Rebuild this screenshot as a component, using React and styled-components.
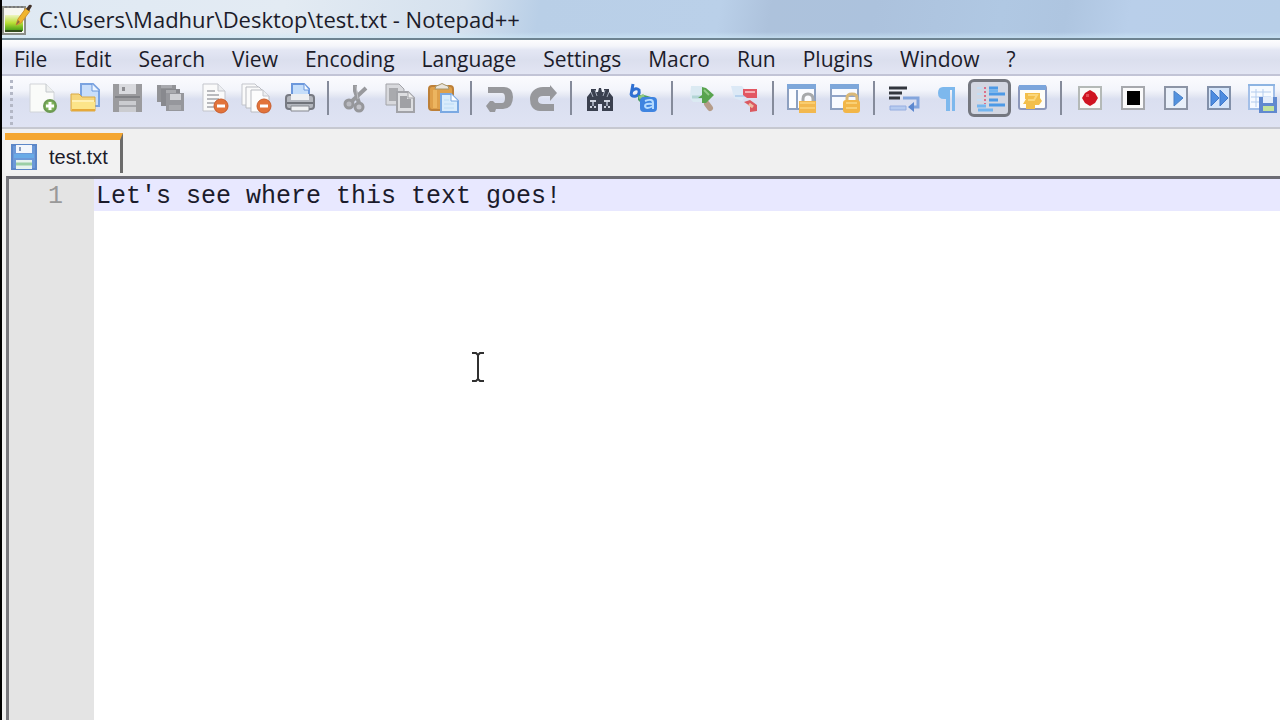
import React from "react";
import styled, { createGlobalStyle } from "styled-components";

const GlobalStyle = createGlobalStyle`
  *, *::before, *::after { box-sizing: border-box; }
  body { margin: 0; background: #fff; }
  button, textarea { font: inherit; color: inherit; margin: 0; }
`;

const Window = styled.div`
  display: flex;
  flex-direction: column;
  min-height: 100vh;
  overflow: hidden;
  border-left: 2px solid #000;
  background: #f0f0f0;
  color: #1c1c2a;
  font-family: "Open Sans", "Noto Sans", sans-serif;
`;

const TitleBar = styled.header`
  display: flex;
  align-items: center;
  gap: 5px;
  height: 40px;
  border-bottom: 2px solid #6d8391;
  background:
    linear-gradient(to bottom, transparent 32px, rgba(205, 232, 246, 0.6) 38px),
    linear-gradient(100deg, #dfe9f3 0%, #e3ebf3 22%, #d5e1ee 36%, #b9cfe7 42%, #bad0e9 56%, #adc2dc 60%, #acc2dd 68%, #b0c8e3 78%, #aec5e0 83%, #b9cfea 88%, #b8cfe8 100%);
`;

const Title = styled.h1`
  margin: 0;
  font-size: 22px;
  line-height: 32px;
  font-weight: 400;
  white-space: nowrap;
`;

const MenuBar = styled.nav`
  display: flex;
  gap: 27px;
  height: 36px;
  padding: 2px 12px 0;
  border-bottom: 2px solid #c2c4d6;
  background: linear-gradient(to bottom, #fdfdfe 0, #f4f5fa 6px, #e4e7f4 10px, #dbdfee 20px, #e2e5f3 34px);
`;

const MenuItem = styled.button`
  padding: 0;
  border: 0;
  background: none;
  font-size: 21px;
  line-height: 34px;
  white-space: nowrap;
`;

const Toolbar = styled.div`
  display: flex;
  align-items: center;
  height: 53px;
  padding-bottom: 8px;
  border-bottom: 2px solid #c6c8d0;
  background: linear-gradient(to bottom, #fbfbfe 0, #f3f5fb 14px, #e6e9f4 19px, #dadff0 23px, #dfe3f3 50px);
`;

const Grip = styled.span`
  flex: none;
  align-self: flex-start;
  width: 3px;
  height: 48px;
  margin: 4px 7px 0 8px;
  background: repeating-linear-gradient(to bottom, #b4b8c6 0 3px, transparent 3px 6px);
`;

const Divider = styled.span`
  flex: none;
  width: 2px;
  height: 34px;
  margin: 0 ${(p) => (p.$wide ? 7 : 6)}px;
  background: #858b9b;
`;

const ToolButton = styled.button`
  flex: none;
  display: grid;
  place-items: center;
  width: 43px;
  height: 38px;
  padding: 0;
  border: 3px solid ${(p) => (p.$active ? "#74777f" : "transparent")};
  border-radius: 6px;
  background: ${(p) => (p.$active ? "#d3d7e2" : "none")};
`;

const Icon = styled.svg`
  display: block;
  flex: none;
  width: ${(p) => p.$size || 32}px;
  height: ${(p) => p.$size || 32}px;
`;

const TabBar = styled.div`
  display: flex;
  align-items: flex-start;
  height: 47px;
  padding: 4px 0 0 3px;
  background: #f0f0f0;
`;

const Tab = styled.button`
  display: flex;
  align-items: center;
  gap: 12px;
  height: 40px;
  padding: 0 12px 0 6px;
  border: 0;
  border-top: 7px solid #f4a631;
  border-right: 3px solid #6b6b6b;
  background: #f2f2f2;
  font-family: "Liberation Sans", Arial, sans-serif;
  font-size: 20px;
  line-height: 32px;
`;

const EditorFrame = styled.main`
  position: relative;
  flex: 1;
  display: flex;
  margin-left: 4px;
  border-top: 3px solid #6c6c74;
  border-left: 3px solid #77777c;
  background: #fff;
  font-family: "Liberation Mono", "Courier New", monospace;
  font-size: 25px;
  line-height: 32px;
`;

const Gutter = styled.div`
  flex: none;
  width: 85px;
  padding: 2px 31px 0 0;
  background: #e4e4e4;
  color: #999;
  text-align: right;
`;

const TextArea = styled.textarea`
  flex: 1;
  min-width: 0;
  padding: 2px 2px 0;
  border: 0;
  outline: 0;
  resize: none;
  background: linear-gradient(#e8e8ff, #e8e8ff) 0 0 / 100% 32px no-repeat #fff;
  color: #1b1b2c;
`;

const Pointer = styled.svg`
  position: absolute;
  left: 461px;
  top: 172px;
  width: 16px;
  height: 32px;
  pointer-events: none;
`;

const AppLogo = () => (
  <Icon viewBox="0 0 32 32" aria-hidden="true">
    <defs>
      <linearGradient id="lime" x1="0" y1="0" x2="0" y2="1">
        <stop offset="0" stopColor="#eef5c0" />
        <stop offset="0.5" stopColor="#b9df35" />
        <stop offset="1" stopColor="#3f9a16" />
      </linearGradient>
    </defs>
    <path d="M1 4h22v27H1z" fill="#f7f7f0" stroke="#8b8e88" strokeWidth="2" />
    <path d="M3 12h18v16H3z" fill="url(#lime)" />
    <path d="M3 28h17" stroke="#334d1c" strokeWidth="2" />
    <path d="M3 4h18" stroke="#77787a" strokeWidth="2" strokeDasharray="2 2" />
    <path d="M14 22l2-6L24 5l4 3-9 12z" fill="#f0b52d" stroke="#cf9331" />
    <path d="M24 6l3-4q2-1 3 1l-3 5z" fill="#42322a" />
    <path d="M14 22l2-5 2 2z" fill="#8a6d42" />
  </Icon>
);

const icons = {
  new: (
    <>
      <path d="M4 2h16l8 8v20H4z" fill="#fafbf9" stroke="#d1d4d8" />
      <path d="M20 2v8h8" fill="#eef0f0" stroke="#c4c8cc" />
      <circle cx="24" cy="24" r="6" fill="#80b45c" stroke="#6c9a54" strokeWidth="2" />
      <path d="M24 20v8M20 24h8" stroke="#fff" strokeWidth="3" />
    </>
  ),
  open: (
    <>
      <path d="M12 2h12l6 6v16H12z" fill="#c9defa" stroke="#7ba3e0" strokeWidth="2" />
      <path d="M23 2v7h7" fill="#eef6ff" stroke="#6a97dc" />
      <path d="M2 12h8l3 3h13v14H2z" fill="#f6d67c" stroke="#d9a944" />
      <path d="M3 20h23v9H3z" fill="#fce489" />
      <path d="M3 19h22" stroke="#fff0b4" strokeWidth="2" />
      <path d="M3 28h23" stroke="#e6a93a" strokeWidth="2" />
    </>
  ),
  save: (
    <>
      <path d="M1 2h29v28H1z" fill="#9b9b9e" />
      <path d="M7 2h17v10H7z" fill="#d9dade" />
      <path d="M10 5h3v4h-3z" fill="#8d8d91" />
      <path d="M3 15h25" stroke="#808185" strokeWidth="2" />
      <path d="M7 19h17v11H7z" fill="#cbccd0" />
      <path d="M7 24h17" stroke="#a4a5aa" strokeWidth="2" />
    </>
  ),
  saveAll: (
    <>
      <path d="M2 3h19v17H2z" fill="#929397" />
      <path d="M6 3h11v3H6z" fill="#a8a9ae" />
      <path d="M6 7h19v17H6z" fill="#88898e" />
      <path d="M11 8h10v3H11z" fill="#a9aaae" />
      <path d="M11 11h18v18H11z" fill="#96979c" />
      <path d="M15 12h11v6H15z" fill="#d0d1d5" />
      <path d="M14 23h12v5H14z" fill="#a9aaae" />
    </>
  ),
  close: (
    <>
      <path d="M5 2h15l7 7v20H5z" fill="#fafafa" stroke="#c3c5cb" />
      <path d="M20 2v7h7" fill="#eceef1" stroke="#c3c5cb" />
      <path d="M9 9h8M9 13h12M9 17h12M9 21h8M9 25h7" stroke="#b9babe" strokeWidth="2" />
      <circle cx="23" cy="24" r="7" fill="#e2733a" stroke="#c85c2c" />
      <path d="M19 24h8" stroke="#fff" strokeWidth="3" />
    </>
  ),
  closeAll: (
    <>
      <path d="M1 2h13l4 4v17H1z" fill="#fafafa" stroke="#c3c5cb" />
      <path d="M5 5h13l5 5v16H5z" fill="#fafafa" stroke="#b9bbc1" />
      <path d="M10 8h12l6 6v16H10z" fill="#fcfcfc" stroke="#b9bbc1" />
      <path d="M22 8v6h6" fill="#eceef1" stroke="#c3c5cb" />
      <circle cx="23" cy="24" r="7" fill="#e2733a" stroke="#c85c2c" />
      <path d="M19 24h8" stroke="#fff" strokeWidth="3" />
    </>
  ),
  print: (
    <>
      <path d="M8 15V2h12l5 5v8z" fill="#c5defa" stroke="#6c98dc" strokeWidth="2" />
      <path d="M20 2v6h5" fill="#f3f9ff" stroke="#6c98dc" />
      <rect x="2" y="13" width="28" height="14" rx="3" fill="#b4b7be" stroke="#777a82" strokeWidth="2" />
      <path d="M7 12h18v6H7z" fill="#eef0f2" />
      <path d="M3 21h26" stroke="#70737a" strokeWidth="2" />
      <path d="M7 24h18v5H7z" fill="#f0f1f3" stroke="#85888f" />
    </>
  ),
  cut: (
    <>
      <path d="M14 3v6l4 12M25 6L10 20" fill="none" stroke="#98999d" strokeWidth="4" />
      <path d="M15 4l2 13" stroke="#c1c2c6" />
      <circle cx="8" cy="22" r="4" fill="#b9bac0" stroke="#96979b" strokeWidth="3" />
      <circle cx="18" cy="25" r="4" fill="#c3c4ca" stroke="#96979b" strokeWidth="3" />
    </>
  ),
  copy: (
    <>
      <path d="M2 2h13l5 5v16H2z" fill="#d8d9dd" stroke="#a2a3a8" />
      <path d="M5 6h9v13H5z" fill="#a9aaae" />
      <path d="M13 10h11l6 6v14H13z" fill="#dedfe2" stroke="#a2a3a8" strokeWidth="2" />
      <path d="M16 14h7v3h4v9H16z" fill="#a0a1a5" />
      <path d="M24 10v6h6" fill="#eee" stroke="#a2a3a8" />
    </>
  ),
  paste: (
    <>
      <rect x="2" y="4" width="24" height="24" rx="3" fill="#dfa04a" stroke="#bd8038" strokeWidth="2" />
      <path d="M6 8h4v18H6z" fill="#ecb560" />
      <path d="M8 7q0-4 4-4 3-3 6 0 4 0 4 4z" fill="#e9e5dc" stroke="#a79468" />
      <path d="M14 12h10l7 7v11H14z" fill="#d9ecfc" stroke="#7ba9e2" strokeWidth="2" />
      <path d="M24 12v7h7" fill="#fff" stroke="#78a7e2" />
      <path d="M17 18h5M17 22h10M17 26h10" stroke="#bcdcf6" />
    </>
  ),
  undo: (
    <path d="M4 5h16q4 0 7 3 2 3 2 7t-2 8q-3 4-8 4h-7l-1 3H6l-4-6 4-5h3l2 2h7q3 0 3-5t-3-5H4z" fill="#97989c" />
  ),
  redo: (
    <path d="M23 3l7 8-7 8v-5h-7q-5 0-5 4t5 4h11v7H13q-5 0-8-4-2-3-2-8 0-5 3-8 4-4 10-4h7z" fill="#97989c" />
  ),
  find: (
    <>
      <path d="M3 15l4-5V7h5v3h2l1-4h2l1 4h2V7h5v3l4 5v14H18v-7h-4v7H3z" fill="#3a404f" />
      <path d="M7 10l2 5M11 8l2 6M21 8l-2 6M25 10l-2 5" stroke="#a6acbb" />
      <path d="M6 18h6v2H6zM20 18h6v2h-6zM6 24h2v2H6zM10 24h2v2h-2zM20 24h2v2h-2zM24 24h2v2h-2z" fill="#ced3df" />
      <path d="M9 20v4M23 20v4" stroke="#9aa1b2" strokeWidth="2" />
    </>
  ),
  replace: (
    <>
      <path d="M6 2L4 13M5 9q4-4 7-1 1 5-3 6-4 1-5-2" fill="none" stroke="#2f70d2" strokeWidth="3" />
      <path d="M11 13h6l7 2-7 9-6-6z" fill="#4c9c69" />
      <path d="M12 16l5-3" stroke="#91ca84" strokeWidth="3" />
      <rect x="13" y="15" width="17" height="15" rx="4" fill="#3f84e0" />
      <path d="M18 19q8-3 8 2v6M26 22q-8-1-8 2 1 4 8 0" fill="none" stroke="#b5dbff" strokeWidth="2" />
    </>
  ),
  zoomIn: (
    <>
      <path d="M5 4h11l7 9-5 7H7l-3-4z" fill="#dbeaf2" />
      <path d="M6 15h11" stroke="#b2d5d5" strokeWidth="3" />
      <path d="M21 22l3 4" stroke="#b59c89" strokeWidth="6" strokeLinecap="round" />
      <path d="M16 5l4 1 8 7-8 8h-4v-5h-4l4-3z" fill="#58a34f" />
      <path d="M18 8l5 5" stroke="#91c987" strokeWidth="2" />
    </>
  ),
  zoomOut: (
    <>
      <path d="M2 4h11l5 6-5 9-8-3z" fill="#dce9f6" />
      <path d="M6 14h12" stroke="#b8d2ed" strokeWidth="2" />
      <path d="M14 7h14v9H18l-4-3z" fill="#e25762" />
      <path d="M16 10h10" stroke="#f4afb3" strokeWidth="2" />
      <path d="M15 20l6-2 7 5v6l-7 1v-6z" fill="#da5960" />
      <path d="M20 22l4 3" stroke="#efbca0" strokeWidth="3" />
    </>
  ),
  syncV: (
    <>
      <path d="M2 4h27v23H2z" fill="#fbfcff" stroke="#8da0c0" strokeWidth="2" />
      <path d="M1 2h29v5H1z" fill="#7ea7da" />
      <path d="M11 8v18" stroke="#8ca1c2" strokeWidth="2" />
      <path d="M17 20v-3q0-5 5-5t5 5v3" fill="none" stroke="#a7a9ab" strokeWidth="3" />
      <path d="M13 19h17v12H13z" fill="#f2b84f" />
      <path d="M14 21h15M14 26h15" stroke="#f9cd70" strokeWidth="2" />
    </>
  ),
  syncH: (
    <>
      <path d="M2 4h27v23H2z" fill="#f8faff" stroke="#8da0c0" strokeWidth="2" />
      <path d="M1 2h29v5H1z" fill="#7ea7da" />
      <path d="M3 14h25" stroke="#91a4c8" strokeWidth="2" />
      <path d="M18 20v-4q0-4 5-4t5 4v4" fill="none" stroke="#d9b878" strokeWidth="3" />
      <rect x="14" y="18" width="17" height="13" rx="3" fill="#f2b648" />
      <path d="M17 21h11M17 26h11" stroke="#f9d075" strokeWidth="2" />
    </>
  ),
  wrap: (
    <>
      <path d="M1 6h18M1 11h13M1 16h11" stroke="#32363e" strokeWidth="3" />
      <path d="M2 24h16v4H2z" fill="#b6cbf0" stroke="#96aee0" />
      <path d="M15 16h15v9h-6" fill="none" stroke="#83a5dd" strokeWidth="3" />
      <path d="M20 25l6-5v10z" fill="#5c88cf" />
    </>
  ),
  pilcrow: (
    <path d="M24 5H12q-5 0-5 6t6 6h2v12h4V8h2v21h3z" fill="#7db8ed" />
  ),
  indent: (
    <>
      <path d="M15 6h9M15 12h16M15 18h9M15 23h16" stroke="#4d9ae6" strokeWidth="3" />
      <path d="M15 9h9M4 28h15M3 24h9" stroke="#74b6f0" strokeWidth="3" />
      <path d="M3 6h5M3 12h5M3 18h5" stroke="#c3ddf3" strokeWidth="2" />
      <path d="M11 5v17" stroke="#dc6f8b" strokeWidth="2" strokeDasharray="2 2" />
    </>
  ),
  language: (
    <>
      <rect x="2" y="4" width="27" height="23" rx="2" fill="#fffdf8" stroke="#8d98bb" strokeWidth="2" />
      <path d="M2 3h27v5H2z" fill="#7ba5dc" />
      <path d="M8 11h15v5l2 3-3 4h-4v4H9v-5H6l3-5H8z" fill="#f3bf4b" />
      <path d="M11 13h9l-3 5h-6" fill="none" stroke="#fbd77b" strokeWidth="2" />
    </>
  ),
  record: (
    <>
      <path d="M5 5h22v22H5z" fill="#f9faf8" stroke="#b4b9b7" strokeWidth="2" />
      <path d="M16 8l5 3 3 5-3 5-5 3-5-3-3-5 3-5z" fill="#cf1420" />
      <path d="M12 12h3v3h-3z" fill="#e54b52" />
    </>
  ),
  stop: (
    <>
      <path d="M5 5h22v22H5z" fill="#fafafb" stroke="#a6a8ad" strokeWidth="2" />
      <path d="M10 9h13v14H10z" fill="#000" />
    </>
  ),
  play: (
    <>
      <path d="M5 5h22v22H5z" fill="#e9f0fa" stroke="#8c94a5" strokeWidth="2" />
      <path d="M14 9l9 7-9 8z" fill="#5292df" stroke="#4a80c4" />
    </>
  ),
  playMany: (
    <>
      <path d="M5 5h22v22H5z" fill="#d5e5fa" stroke="#8290a9" strokeWidth="2" />
      <path d="M8 8l8 8-8 8zM17 8l8 8-8 8z" fill="#4d8ce0" stroke="#4078c8" />
    </>
  ),
  saveMacro: (
    <>
      <path d="M3 3h25v24H3z" fill="#f6faff" stroke="#a3bfe8" strokeWidth="2" />
      <path d="M2 3h27" stroke="#8db4e2" strokeWidth="2" />
      <path d="M5 10h20M5 15h20M5 20h10M10 7v18M17 7v8" stroke="#b4cdee" />
      <path d="M13 15h18v16H13z" fill="#6189cf" />
      <path d="M17 15h10v6H17z" fill="#e4edfa" />
      <path d="M17 24h11v5H17z" fill="#c3e39c" />
    </>
  ),
};

const groups = [
  { tools: [["new", "New"], ["open", "Open"], ["save", "Save"], ["saveAll", "Save All"], ["close", "Close"], ["closeAll", "Close All"], ["print", "Print"]] },
  { tools: [["cut", "Cut"], ["copy", "Copy"], ["paste", "Paste"]] },
  { tools: [["undo", "Undo"], ["redo", "Redo"]] },
  { tools: [["find", "Find"], ["replace", "Replace"]] },
  { wide: true, tools: [["zoomIn", "Zoom In"], ["zoomOut", "Zoom Out"]] },
  { tools: [["syncV", "Synchronize Vertical Scrolling"], ["syncH", "Synchronize Horizontal Scrolling"]] },
  { wide: true, tools: [["wrap", "Word Wrap"], ["pilcrow", "Show All Characters"], ["indent", "Show Indent Guide"], ["language", "User-Defined Language"]] },
  { tools: [["record", "Start Recording"], ["stop", "Stop Recording"], ["play", "Playback"], ["playMany", "Run a Macro Multiple Times"], ["saveMacro", "Save Macro"]] },
];

const menus = ["File", "Edit", "Search", "View", "Encoding", "Language", "Settings", "Macro", "Run", "Plugins", "Window", "?"];

export default function App() {
  return (
    <Window>
      <GlobalStyle />
      <TitleBar>
        <AppLogo />
        <Title>C:\Users\Madhur\Desktop\test.txt - Notepad++</Title>
      </TitleBar>
      <MenuBar aria-label="Main menu">
        {menus.map((name) => (
          <MenuItem key={name} type="button">{name}</MenuItem>
        ))}
      </MenuBar>
      <Toolbar role="toolbar" aria-label="Main toolbar">
        <Grip />
        {groups.map(({ tools, wide }, index) => (
          <React.Fragment key={tools[0][0]}>
            {index > 0 && <Divider $wide={wide} />}
            {tools.map(([id, label]) => (
              <ToolButton key={id} type="button" aria-label={label} $active={id === "indent"}>
                <Icon viewBox="0 0 32 32" aria-hidden="true">{icons[id]}</Icon>
              </ToolButton>
            ))}
          </React.Fragment>
        ))}
      </Toolbar>
      <TabBar role="tablist">
        <Tab type="button" role="tab" aria-selected="true">
          <Icon $size={26} viewBox="0 0 26 26" aria-hidden="true">
            <path d="M1 1h24v24H1z" fill="#6c99d8" stroke="#5c87c8" strokeWidth="2" />
            <path d="M5 1h16v8H5z" fill="#f2f6fc" />
            <path d="M8 3h2v4H8z" fill="#8a9dbd" />
            <path d="M3 12h20" stroke="#69abe7" strokeWidth="4" />
            <path d="M5 16h16v9H5z" fill="#e8f3ee" />
            <path d="M5 20h16" stroke="#9ccfa6" strokeWidth="3" />
          </Icon>
          test.txt
        </Tab>
      </TabBar>
      <EditorFrame>
        <Gutter>1</Gutter>
        <TextArea aria-label="test.txt" spellCheck={false} defaultValue="Let's see where this text goes!" />
        <Pointer viewBox="0 0 16 32" aria-hidden="true">
          <path d="M2 2h4l2 2 2-2h4M2 30h4l2-2 2 2h4M8 3v26" fill="none" stroke="#303030" strokeWidth="2" />
        </Pointer>
      </EditorFrame>
    </Window>
  );
}
